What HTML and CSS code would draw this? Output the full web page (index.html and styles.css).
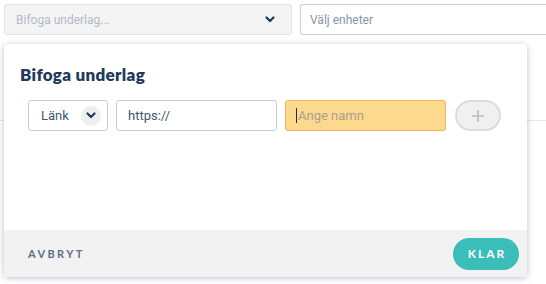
FILE: index.html
```html
<!DOCTYPE html>
<html lang="sv">
<head>
    <meta charset="UTF-8">
    <title>Bifoga underlag</title>
    <link rel="stylesheet" href="styles.css">
</head>
<body>

    <!-- Filter bar -->
    <div class="toolbar">
        <div class="select-box">
            <span class="placeholder">Bifoga underlag...</span>
            <svg class="chevron" width="10" height="7" viewBox="0 0 10 7"><path d="M1.5 1.5 L5 5 L8.5 1.5" fill="none" stroke="#1f3a5a" stroke-width="2.2" stroke-linecap="round" stroke-linejoin="round"/></svg>
        </div>
        <div class="text-box">Välj enheter</div>
    </div>
    <div class="page-row"></div>

    <!-- Attach popover -->
    <div class="popover">
        <div class="popover-body">
            <h2 class="popover-title">Bifoga underlag</h2>
            <div class="attach-row">
                <div class="type-select">
                    <span>Länk</span>
                    <span class="round-chevron">
                        <svg width="10" height="7" viewBox="0 0 10 7"><path d="M1.5 1.5 L5 5 L8.5 1.5" fill="none" stroke="#1f3a5a" stroke-width="2.2" stroke-linecap="round" stroke-linejoin="round"/></svg>
                    </span>
                </div>
                <div class="field">https://</div>
                <div class="field field-active"><span class="caret"></span><span class="hint">Ange namn</span></div>
                <button class="add-button">
                    <svg width="14" height="14" viewBox="0 0 14 14"><path d="M7 1 V13 M1 7 H13" stroke="#b3bcc6" stroke-width="1.6"/></svg>
                </button>
            </div>
        </div>
        <div class="popover-footer">
            <span class="cancel">AVBRYT</span>
            <button class="done">KLAR</button>
        </div>
    </div>

</body>
</html>
```

FILE: styles.css
```css
/* General */
body {
    margin: 0;
    font-family: Roboto, "Noto Sans", sans-serif;
    background: #fff;
    width: 546px;
    height: 284px;
    overflow: hidden;
    position: relative;
}

/* Toolbar */
.toolbar {
    display: flex;
    gap: 8px;
    padding: 4px 0 0 4px;
}

.select-box {
    flex: none;
    width: 288px;
    height: 31px;
    box-sizing: border-box;
    background: #f4f4f4;
    border: 1px solid #e3e3e3;
    border-radius: 3px;
    display: flex;
    align-items: center;
    justify-content: space-between;
    padding: 0 16px 0 11px;
}

.placeholder {
    font-size: 12px;
    color: #b2bac4;
}

.text-box {
    flex: 1;
    height: 31px;
    box-sizing: border-box;
    border: 1px solid #c8d0d9;
    border-right: none;
    border-radius: 3px 0 0 3px;
    font-size: 12px;
    color: #8795a5;
    display: flex;
    align-items: center;
    padding-left: 9px;
}

.page-row {
    margin-top: 85px;
    border-bottom: 1px solid #e6e8eb;
}

/* Popover */
.popover {
    position: absolute;
    top: 44px;
    left: 4px;
    width: 523px;
    height: 233px;
    background: #fff;
    border-radius: 4px;
    box-shadow: 0 1px 6px rgba(60, 80, 110, 0.35);
    display: flex;
    flex-direction: column;
    overflow: hidden;
}

.popover-body {
    flex: 1;
    padding: 21px 24px 0 16px;
}

.popover-title {
    margin: 0;
    font-family: Lato, "Open Sans", sans-serif;
    font-size: 17px;
    font-weight: 800;
    color: #1e3a5c;
    line-height: 20px;
    letter-spacing: 0.3px;
}

.attach-row {
    display: flex;
    gap: 8px;
    margin-top: 15px;
    padding-left: 8px;
}

.type-select, .field {
    height: 31px;
    box-sizing: border-box;
    border: 1px solid #c5ced8;
    border-radius: 3px;
    display: flex;
    align-items: center;
    font-size: 13px;
    color: #3f5670;
}

.type-select {
    width: 80px;
    padding: 0 6px 0 12px;
    justify-content: space-between;
}

.round-chevron {
    width: 20px;
    height: 20px;
    border-radius: 50%;
    background: #eeeeee;
    display: flex;
    align-items: center;
    justify-content: center;
}

.field {
    width: 161px;
    padding-left: 11px;
}

.field-active {
    width: 161px;
    background: #fdd98e;
    border-color: #f2b35c;
    padding-left: 10px;
}

.caret {
    width: 1px;
    height: 15px;
    background: #1e2a38;
    margin-right: 1px;
}

.hint {
    color: #a9a090;
}

.add-button {
    width: 46px;
    height: 31px;
    margin-left: 1px;
    border: 2px solid #dcdcdc;
    background: #f0f0f0;
    border-radius: 16px;
    display: flex;
    align-items: center;
    justify-content: center;
    padding: 0;
}

/* Footer */
.popover-footer {
    height: 47px;
    background: #f2f2f2;
    display: flex;
    align-items: center;
    justify-content: space-between;
    padding: 0 8px 0 24px;
}

.cancel {
    font-family: Lato, sans-serif;
    font-size: 11px;
    font-weight: 700;
    letter-spacing: 2.4px;
    color: #5a7089;
}

.done {
    width: 66px;
    height: 32px;
    border: none;
    border-radius: 16px;
    background: #3bbdb9;
    color: #fff;
    font-family: Lato, sans-serif;
    font-size: 12px;
    font-weight: 700;
    letter-spacing: 2px;
    padding: 0 0 0 2px;
}
```
